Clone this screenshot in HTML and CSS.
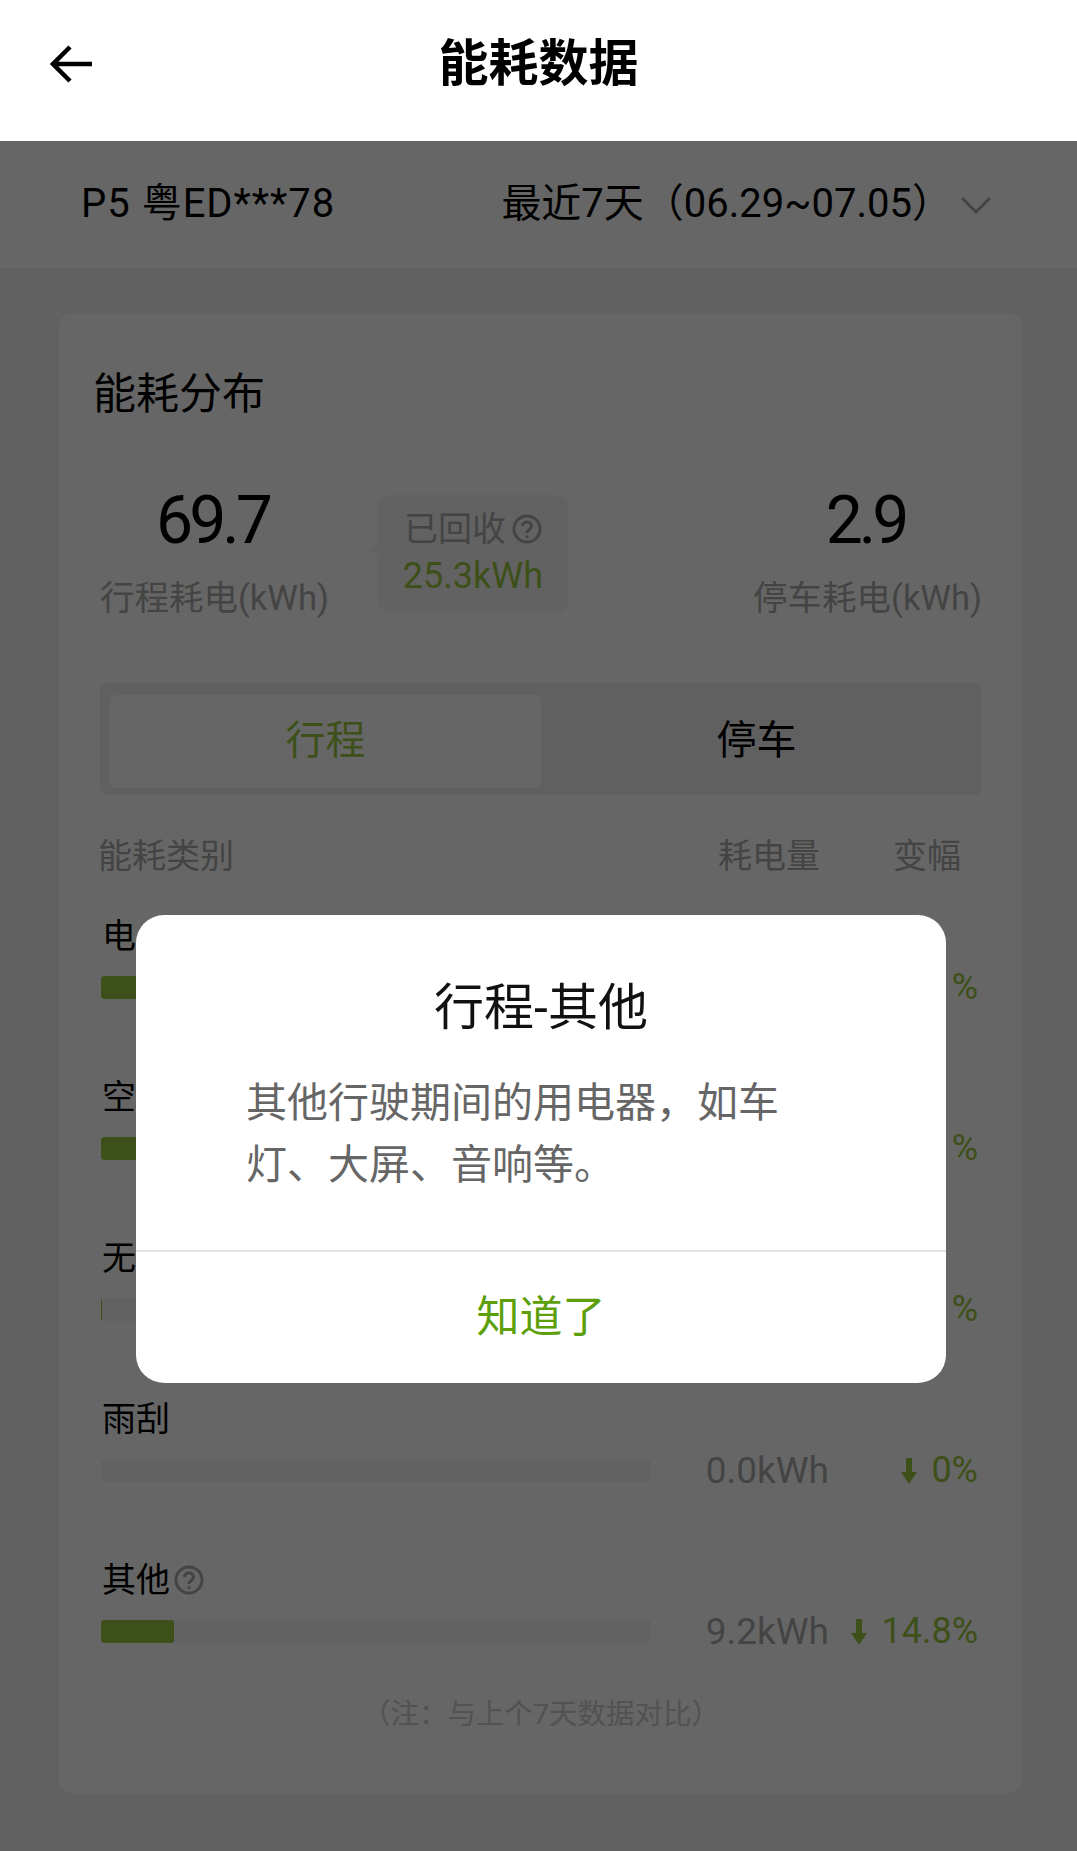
FILE: index.html
```html
<!DOCTYPE html>
<html lang="zh-CN">
<head>
    <meta charset="UTF-8">
    <meta name="viewport" content="width=device-width, initial-scale=1.0">
    <title>能耗数据</title>
    <link rel="stylesheet" href="styles.css">
</head>
<body>

    <header class="topbar">
        <svg class="back-icon" viewBox="0 0 42 38"><path d="M20 2 L3 19 L20 36 M3 19 H42"/></svg>
        <h1>能耗数据</h1>
    </header>

    <div class="filter">
        <span class="filter-car">P5 粤ED***78</span>
        <div class="filter-range">
            <span>最近7天（06.29~07.05）</span>
            <svg class="chevron" viewBox="0 0 32 18"><path d="M2 2 L16 16 L30 2"/></svg>
        </div>
    </div>

    <main class="card">
        <h2>能耗分布</h2>

        <div class="stats">
            <div class="stat">
                <div class="stat-value">69.7</div>
                <div class="stat-label">行程耗电(kWh)</div>
            </div>
            <div class="recovered">
                <div class="recovered-title">已回收
                    <svg class="help-icon" viewBox="0 0 30 30"><circle cx="15" cy="15" r="13"/><path d="M10.5 12 C10.5 6.5 19.5 6.5 19.5 12 C19.5 15.5 15 15.5 15 19"/><path class="dot" d="M15 21.5 V24"/></svg>
                </div>
                <div class="recovered-value">25.3kWh</div>
            </div>
            <div class="stat stat-right">
                <div class="stat-value">2.9</div>
                <div class="stat-label">停车耗电(kWh)</div>
            </div>
        </div>

        <div class="tabs">
            <div class="tab active">行程</div>
            <div class="tab">停车</div>
        </div>

        <div class="table-head">
            <span class="head-name">能耗类别</span>
            <span class="head-amount">耗电量</span>
            <span class="head-change">变幅</span>
        </div>

        <div class="row">
            <div class="row-label">电</div>
            <div class="row-data">
                <div class="track"><div class="fill" style="width: 30%"></div></div>
                <span></span>
                <span class="change">%</span>
            </div>
        </div>
        <div class="row">
            <div class="row-label">空</div>
            <div class="row-data">
                <div class="track"><div class="fill" style="width: 30%"></div></div>
                <span></span>
                <span class="change">%</span>
            </div>
        </div>
        <div class="row">
            <div class="row-label">无</div>
            <div class="row-data">
                <div class="track"><div class="fill" style="width: 1px"></div></div>
                <span></span>
                <span class="change">%</span>
            </div>
        </div>
        <div class="row">
            <div class="row-label">雨刮</div>
            <div class="row-data">
                <div class="track"></div>
                <span class="amount">0.0kWh</span>
                <span class="change">
                    <svg class="down-icon" viewBox="0 0 16 26"><path d="M5 0 H11 V14 H16 L8 26 L0 14 H5 Z"/></svg>
                    0%
                </span>
            </div>
        </div>
        <div class="row">
            <div class="row-label">其他
                <svg class="help-icon" viewBox="0 0 30 30"><circle cx="15" cy="15" r="13"/><path d="M10.5 12 C10.5 6.5 19.5 6.5 19.5 12 C19.5 15.5 15 15.5 15 19"/><path class="dot" d="M15 21.5 V24"/></svg>
            </div>
            <div class="row-data">
                <div class="track"><div class="fill" style="width: 13.2%"></div></div>
                <span class="amount">9.2kWh</span>
                <span class="change">
                    <svg class="down-icon" viewBox="0 0 16 26"><path d="M5 0 H11 V14 H16 L8 26 L0 14 H5 Z"/></svg>
                    14.8%
                </span>
            </div>
        </div>

        <p class="note">（注：与上个7天数据对比）</p>
    </main>

    <div class="overlay">
        <div class="dialog">
            <h3>行程-其他</h3>
            <p>其他行驶期间的用电器，如车灯、大屏、音响等。</p>
            <div class="dialog-btn">知道了</div>
        </div>
    </div>

</body>
</html>
```

FILE: styles.css
```css
/* page structure */
body {
    font-family: Roboto, "Noto Sans CJK SC", sans-serif;
    background-color: #f2f2f2;
    color: #000;
    margin: 0;
    min-height: 1851px;
    overflow: hidden;
}

.topbar {
    display: flex;
    align-items: center;
    justify-content: center;
    height: 141px;
    background-color: #fff;
    position: relative;
    z-index: 2;
}

.topbar h1 {
    margin: 0;
    padding-bottom: 13px;
    font-size: 50px;
    font-weight: 700;
    line-height: 60px;
}

.back-icon {
    position: absolute;
    left: 50px;
    top: 45px;
    width: 42px;
    height: 38px;
    fill: none;
    stroke: #000;
    stroke-width: 4.5;
}

.filter {
    display: flex;
    align-items: center;
    justify-content: space-between;
    height: 127px;
    padding: 0 85px 0 81px;
    background-color: #fff;
    font-size: 40px;
    line-height: 50px;
}

.filter-car {
    letter-spacing: 1px;
    padding-bottom: 2px;
}

.filter-range {
    display: flex;
    align-items: center;
    gap: 8px;
}

.filter-range span {
    padding-bottom: 2px;
}

.chevron {
    width: 32px;
    height: 18px;
    fill: none;
    stroke: #aaa;
    stroke-width: 3;
}

/* card */
.card {
    margin: 45px 55px 0 59px;
    padding: 56px 40px 60px 41px;
    height: 1480px;
    box-sizing: border-box;
    background-color: #fff;
    border-radius: 14px;
}

.card h2 {
    margin: 0 0 0 -7px;
    font-size: 43px;
    font-weight: 400;
    line-height: 50px;
}

.stats {
    display: flex;
    align-items: flex-start;
    margin-top: 58px;
}

.stat {
    display: flex;
    flex-direction: column;
    align-items: center;
}

.stat-right {
    margin-left: auto;
}

.stat-value {
    margin-right: 4px;
    font-size: 66px;
    line-height: 88px;
    letter-spacing: -4px;
}

.stat-label {
    margin-top: 11px;
    font-size: 34.5px;
    line-height: 44px;
    color: #aaa;
}

.recovered {
    position: relative;
    margin: 18px 0 0 49px;
    width: 190px;
    height: 117px;
    padding-top: 12px;
    box-sizing: border-box;
    border-radius: 10px;
    background-color: #f5f5f5;
    text-align: center;
}

.recovered::before {
    content: "";
    position: absolute;
    left: -5px;
    top: 50px;
    width: 10px;
    height: 10px;
    background-color: #f5f5f5;
    transform: rotate(45deg);
}

.recovered-title {
    display: flex;
    align-items: center;
    justify-content: center;
    gap: 6px;
    font-size: 34px;
    line-height: 44px;
    color: #aaa;
}

.recovered-value {
    margin-top: 3px;
    font-size: 36px;
    line-height: 44px;
    color: #99c840;
}

.help-icon {
    width: 30px;
    height: 30px;
    fill: none;
    stroke: #aaa;
    stroke-width: 3;
}

/* tabs */
.tabs {
    display: flex;
    margin-top: 63px;
    padding: 12px 10px 7px;
    height: 112px;
    box-sizing: border-box;
    border-radius: 8px;
    background-color: #f0f0f0;
}

.tab {
    flex: 1;
    display: flex;
    align-items: center;
    justify-content: center;
    padding-bottom: 10px;
    font-size: 40px;
}

.tab.active {
    border-radius: 6px;
    background-color: #fff;
    color: #99c840;
}

/* table */
.table-head {
    display: grid;
    grid-template-columns: 550px 178px 148px;
    margin: 39px 5px 0 0;
    font-size: 34px;
    line-height: 44px;
    color: #aaa;
}

.head-name {
    margin-left: -2px;
}

.head-amount {
    text-align: right;
    padding-right: 8px;
}

.head-change {
    text-align: right;
    padding-right: 15px;
}

.row {
    margin: 38px 3px 0 1px;
}

.row + .row {
    margin-top: 78px;
}

.row-label {
    display: flex;
    align-items: center;
    gap: 4px;
    padding-left: 1px;
    font-size: 34px;
    line-height: 40px;
}

.row-data {
    display: grid;
    grid-template-columns: 550px 178px 149px;
    grid-auto-rows: 23px;
    align-items: center;
    margin-top: 20px;
    height: 23px;
}

.track {
    height: 23px;
    border-radius: 3px;
    background-color: #f6f6f6;
    overflow: hidden;
}

.fill {
    height: 100%;
    border-radius: 3px;
    background-color: #99c840;
}

.amount {
    text-align: right;
    font-size: 37px;
    line-height: 23px;
    color: #aaa;
}

.change {
    display: flex;
    align-items: center;
    justify-content: flex-end;
    gap: 14px;
    font-size: 36px;
    line-height: 23px;
    color: #99c840;
}

.down-icon {
    flex-shrink: 0;
    width: 16px;
    height: 26px;
    fill: #99c840;
}

.note {
    margin: 52px 0 0;
    text-align: center;
    font-size: 28.5px;
    line-height: 40px;
    color: #ccc;
}

/* dialog */
.overlay {
    position: absolute;
    top: 141px;
    left: 0;
    right: 0;
    height: 1710px;
    box-sizing: border-box;
    padding: 774px 131px 0 136px;
    background-color: rgba(0, 0, 0, 0.6);
}

.dialog {
    height: 468px;
    box-sizing: border-box;
    border-radius: 28px;
    background-color: #fff;
    overflow: hidden;
}

.dialog h3 {
    margin: 0;
    padding-top: 63px;
    text-align: center;
    font-size: 50px;
    font-weight: 400;
    line-height: 60px;
    color: #111;
}

.dialog p {
    margin: 0;
    padding: 34px 140px 0 110px;
    height: 212px;
    box-sizing: border-box;
    font-size: 41px;
    line-height: 62px;
    color: #666;
}

.dialog-btn {
    display: flex;
    align-items: center;
    justify-content: center;
    height: 133px;
    padding-bottom: 10px;
    border-top: 2px solid #e2e2e2;
    box-sizing: border-box;
    font-size: 43px;
    color: #5d9f0a;
}
```
